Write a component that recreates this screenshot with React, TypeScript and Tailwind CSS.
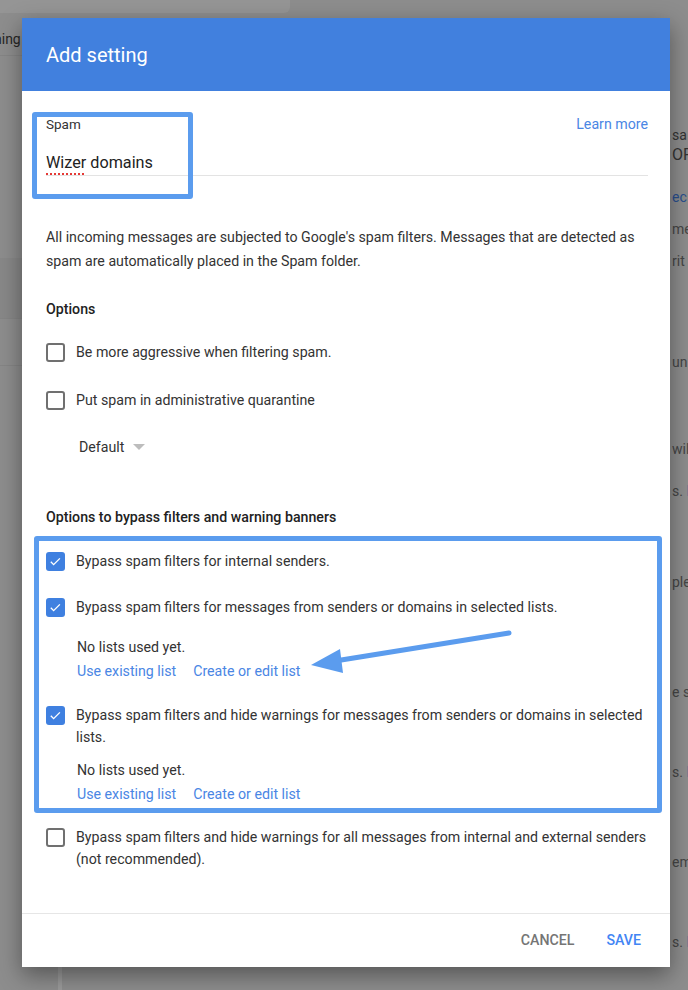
import React from 'react';

const Checkbox = ({ checked }: { checked?: boolean }) =>
  checked ? (
    <span className="flex h-[19px] w-[19px] shrink-0 items-center justify-center rounded-[3px] bg-[#3f80e0]">
      <svg viewBox="0 0 24 24" className="h-[15px] w-[15px]" fill="none" stroke="white" strokeWidth={2.2}>
        <path d="M4.5 12.5l4.5 4.5 10-10" />
      </svg>
    </span>
  ) : (
    <span className="block h-[19px] w-[19px] shrink-0 rounded-[3px] border-2 border-[#707070] bg-white" />
  );

const Row = ({ checked, children, className = '' }: { checked?: boolean; children: React.ReactNode; className?: string }) => (
  <div className={`flex items-start gap-[11px] ${className}`}>
    <div className="pt-[2px]">
      <Checkbox checked={checked} />
    </div>
    <div className="flex-1 text-[14.2px] leading-[22px] text-[#333]">{children}</div>
  </div>
);

const ListLinks = ({ className = '' }: { className?: string }) => (
  <div className={`pl-[31px] ${className}`}>
    <div className="text-[14.2px] leading-6 text-[#333]">No lists used yet.</div>
    <div className="flex gap-[17px] text-[14.2px] leading-6 text-[#4a86e4]">
      <span>Use existing list</span>
      <span>Create or edit list</span>
    </div>
  </div>
);

export default function App() {
  return (
    <div className="relative h-[990px] w-[688px] overflow-hidden bg-[#8d8d8d] font-['Roboto',sans-serif]">
      {/* page behind the dialog */}
      <div className="flex h-full">
        <div className="w-[22px] shrink-0">
          <div className="h-[13px] w-[290px] rounded-br-[6px] bg-[#959595]" />
          <div className="mt-[16px] -ml-[6px] whitespace-nowrap text-[14px] leading-5 text-[#262626]">ning</div>
          <div className="mt-[6px] h-px bg-[#858585]" />
          <div className="mt-[202px] h-[60px] bg-[#888]" />
          <div className="h-px bg-[#858585]" />
          <div className="mt-[46px] h-px bg-[#858585]" />
        </div>
        <div className="flex-1" />
        <div className="w-[18px] shrink-0 overflow-hidden whitespace-nowrap pl-[2px] text-[14px] leading-5 text-[#333]">
          <div className="mt-[125px]">sa</div>
          <div className="text-[16px]">OF</div>
          <div className="mt-[22px] text-[#2a4f8d]">ec</div>
          <div className="mt-[12px] text-[#454545]">me</div>
          <div className="mt-[12px] text-[#454545]">rit</div>
          <div className="mt-[81px] text-[#454545]">un</div>
          <div className="mt-[67px] text-[#454545]">will</div>
          <div className="mt-[22px] text-[#454545]">s. <span className="text-[#2a4f8d]">I</span></div>
          <div className="mt-[71px] text-[#454545]">plea</div>
          <div className="mt-[90px] text-[#454545]">e s</div>
          <div className="mt-[60px] text-[#454545]">s. <span className="text-[#2a4f8d]">I</span></div>
          <div className="mt-[70px] text-[#454545]">em</div>
          <div className="mt-[60px] text-[#454545]">s. <span className="text-[#2a4f8d]">I</span></div>
        </div>
      </div>
      <div className="absolute left-[58px] top-[960px] h-[30px] w-[4px] bg-[#9a9a9a]" />

      {/* dialog */}
      <div className="absolute left-[22px] top-[18px] flex h-[949px] w-[648px] flex-col bg-white shadow-[0_8px_22px_rgba(0,0,0,0.4)]">
        <div className="flex h-[73px] shrink-0 items-center bg-[#4180de] px-6 text-[20px] text-white">Add setting</div>

        <div className="flex-1 pl-6 pr-[22px] pt-[25px]">
          <div className="flex justify-between text-[13.5px] leading-4">
            <span className="text-[#333]">Spam</span>
            <span className="text-[14.2px] text-[#4a86e4]">Learn more</span>
          </div>
          <div className="mt-[19px] border-b border-[#e3e3e3] text-[16.2px] leading-6 text-[#222]">
            <span className="underline decoration-[#e53935] decoration-dotted decoration-2 underline-offset-[5px]">Wizer</span> domains
          </div>

          <p className="mt-[49px] text-[14.2px] leading-6 text-[#333]">
            All incoming messages are subjected to Google's spam filters. Messages that are detected as spam are automatically placed in the Spam folder.
          </p>

          <div className="mt-[26px] text-[14.2px] font-medium leading-5 text-[#222]">Options</div>
          <Row className="mt-[22px]">Be more aggressive when filtering spam.</Row>
          <Row className="mt-[26px]">Put spam in administrative quarantine</Row>
          <div className="mt-[24px] flex items-center gap-[9px] pl-[33px] text-[14.2px] leading-6 text-[#333]">
            Default
            <svg viewBox="0 0 12 6" className="h-[6px] w-[12px]">
              <path d="M0 0h12L6 6z" fill="#bdbdbd" />
            </svg>
          </div>

          <div className="mt-[48px] text-[14.2px] font-medium leading-5 text-[#222]">Options to bypass filters and warning banners</div>
          <Row checked className="mt-[23px]">Bypass spam filters for internal senders.</Row>
          <Row checked className="mt-[24px]">Bypass spam filters for messages from senders or domains in selected lists.</Row>
          <ListLinks className="mt-[17px]" />
          <Row checked className="mt-[21px]">Bypass spam filters and hide warnings for messages from senders or domains in selected lists.</Row>
          <ListLinks className="mt-[10px]" />
          <Row className="mt-[20px]">Bypass spam filters and hide warnings for all messages from internal and external senders (not recommended).</Row>
        </div>

        <div className="flex h-[54px] shrink-0 items-center justify-end gap-[32px] border-t border-[#e6e6e6] pr-[29px] text-[14.2px] font-medium">
          <span className="text-[#757575]">CANCEL</span>
          <span className="text-[#4285f4]">SAVE</span>
        </div>
      </div>

      {/* annotations */}
      <div className="absolute left-[32px] top-[112px] h-[87px] w-[161px] rounded-[3px] border-[5.5px] border-[#5b9cee]" />
      <div className="absolute left-[34px] top-[536px] h-[277px] w-[628px] rounded-[3px] border-[5.5px] border-[#5b9cee]" />
      <svg className="absolute left-0 top-0" width="688" height="990" viewBox="0 0 688 990">
        <line x1="509" y1="633" x2="335" y2="661" stroke="#5b9cee" strokeWidth="5" strokeLinecap="round" />
        <path d="M311 665L340 649L343 673Z" fill="#5b9cee" />
      </svg>
    </div>
  );
}
